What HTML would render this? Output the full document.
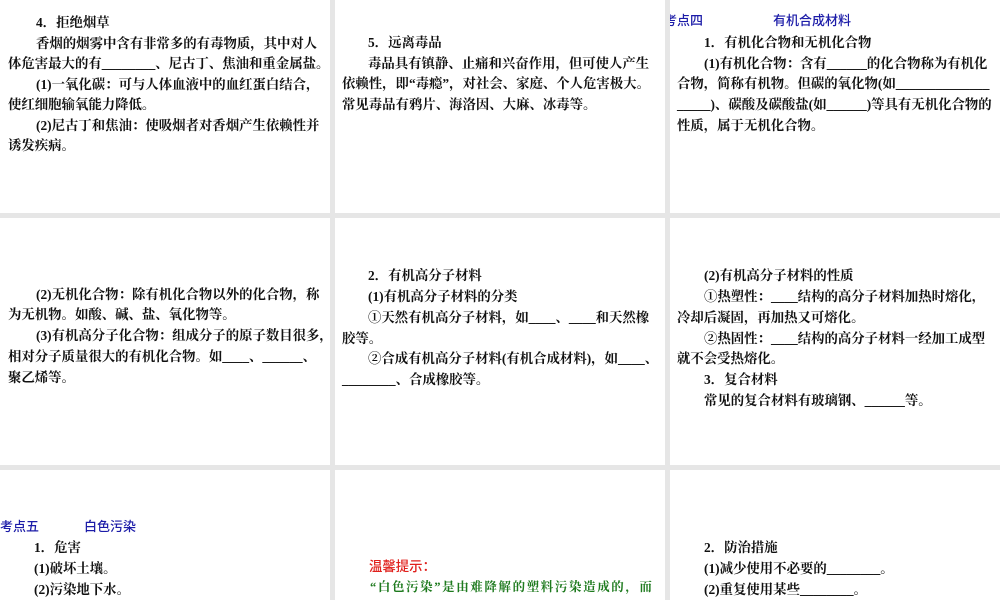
<!DOCTYPE html>
<html><head><meta charset="utf-8"><style>
html,body{margin:0;padding:0;width:1000px;height:600px;overflow:hidden;background:#e6e6e6;}
.p{position:absolute;background:#fff;overflow:hidden;}
.l{position:absolute;white-space:nowrap;height:20px;line-height:20px;font-size:13.4px;color:#111;font-family:"Liberation Serif","Noto Serif CJK SC",serif;font-weight:700;margin-top:1px;}
.h{color:#1c1ca8;font-size:13px;font-family:"Liberation Sans","Noto Sans CJK SC",sans-serif;font-weight:500;}
.r{color:#e0201c;font-family:"Liberation Sans","Noto Sans CJK SC",sans-serif;font-weight:500;}
.g{color:#1e7a1e;font-size:12.5px;font-family:"Liberation Serif","Noto Serif CJK SC",serif;font-weight:700;letter-spacing:1.6px;}
</style></head><body>
<div class="p" style="left:0;top:0;width:330px;height:213px">
<div class="l" style="left:36px;top:12px">4．拒绝烟草</div>
<div class="l" style="left:36px;top:33px">香烟的烟雾中含有非常多的有毒物质，其中对人</div>
<div class="l" style="left:8px;top:53px">体危害最大的有________、尼古丁、焦油和重金属盐。</div>
<div class="l" style="left:36px;top:74px">(1)一氧化碳：可与人体血液中的血红蛋白结合，</div>
<div class="l" style="left:8px;top:94px">使红细胞输氧能力降低。</div>
<div class="l" style="left:36px;top:115px">(2)尼古丁和焦油：使吸烟者对香烟产生依赖性并</div>
<div class="l" style="left:8px;top:135px">诱发疾病。</div>
</div>
<div class="p" style="left:335px;top:0;width:330px;height:213px">
<div class="l" style="left:33px;top:32px">5．远离毒品</div>
<div class="l" style="left:33px;top:53px">毒品具有镇静、止痛和兴奋作用，但可使人产生</div>
<div class="l" style="left:7px;top:73px">依赖性，即“毒瘾”，对社会、家庭、个人危害极大。</div>
<div class="l" style="left:7px;top:94px">常见毒品有鸦片、海洛因、大麻、冰毒等。</div>
</div>
<div class="p" style="left:670px;top:0;width:330px;height:213px">
<div class="l h" style="left:-6px;top:10px">考点四</div>
<div class="l h" style="left:103px;top:10px">有机合成材料</div>
<div class="l" style="left:34px;top:32px">1．有机化合物和无机化合物</div>
<div class="l" style="left:34px;top:53px">(1)有机化合物：含有______的化合物称为有机化</div>
<div class="l" style="left:7px;top:73px">合物，简称有机物。但碳的氧化物(如______________</div>
<div class="l" style="left:7px;top:94px">_____)、碳酸及碳酸盐(如______)等具有无机化合物的</div>
<div class="l" style="left:7px;top:115px">性质，属于无机化合物。</div>
</div>
<div class="p" style="left:0;top:218px;width:330px;height:247px">
<div class="l" style="left:36px;top:66px">(2)无机化合物：除有机化合物以外的化合物，称</div>
<div class="l" style="left:8px;top:86px">为无机物。如酸、碱、盐、氧化物等。</div>
<div class="l" style="left:36px;top:107px">(3)有机高分子化合物：组成分子的原子数目很多，</div>
<div class="l" style="left:8px;top:128px">相对分子质量很大的有机化合物。如____、______、</div>
<div class="l" style="left:8px;top:149px">聚乙烯等。</div>
</div>
<div class="p" style="left:335px;top:218px;width:330px;height:247px">
<div class="l" style="left:33px;top:47px">2．有机高分子材料</div>
<div class="l" style="left:33px;top:68px">(1)有机高分子材料的分类</div>
<div class="l" style="left:33px;top:89px">①天然有机高分子材料，如____、____和天然橡</div>
<div class="l" style="left:7px;top:110px">胶等。</div>
<div class="l" style="left:33px;top:130px">②合成有机高分子材料(有机合成材料)，如____、</div>
<div class="l" style="left:7px;top:151px">________、合成橡胶等。</div>
</div>
<div class="p" style="left:670px;top:218px;width:330px;height:247px">
<div class="l" style="left:34px;top:47px">(2)有机高分子材料的性质</div>
<div class="l" style="left:34px;top:68px">①热塑性：____结构的高分子材料加热时熔化，</div>
<div class="l" style="left:7px;top:89px">冷却后凝固，再加热又可熔化。</div>
<div class="l" style="left:34px;top:110px">②热固性：____结构的高分子材料一经加工成型</div>
<div class="l" style="left:7px;top:130px">就不会受热熔化。</div>
<div class="l" style="left:34px;top:151px">3．复合材料</div>
<div class="l" style="left:34px;top:172px">常见的复合材料有玻璃钢、______等。</div>
</div>
<div class="p" style="left:0;top:470px;width:330px;height:130px">
<div class="l h" style="left:0;top:46px">考点五</div>
<div class="l h" style="left:84px;top:46px">白色污染</div>
<div class="l" style="left:34px;top:67px">1．危害</div>
<div class="l" style="left:34px;top:88px">(1)破坏土壤。</div>
<div class="l" style="left:34px;top:109px">(2)污染地下水。</div>
</div>
<div class="p" style="left:335px;top:470px;width:330px;height:130px">
<div class="l r" style="left:34px;top:86px">温馨提示：</div>
<div class="l g" style="left:35px;top:106px">“白色污染”是由难降解的塑料污染造成的，而</div>
</div>
<div class="p" style="left:670px;top:470px;width:330px;height:130px">
<div class="l" style="left:34px;top:67px">2．防治措施</div>
<div class="l" style="left:34px;top:88px">(1)减少使用不必要的________。</div>
<div class="l" style="left:34px;top:109px">(2)重复使用某些________。</div>
</div>
</body></html>
